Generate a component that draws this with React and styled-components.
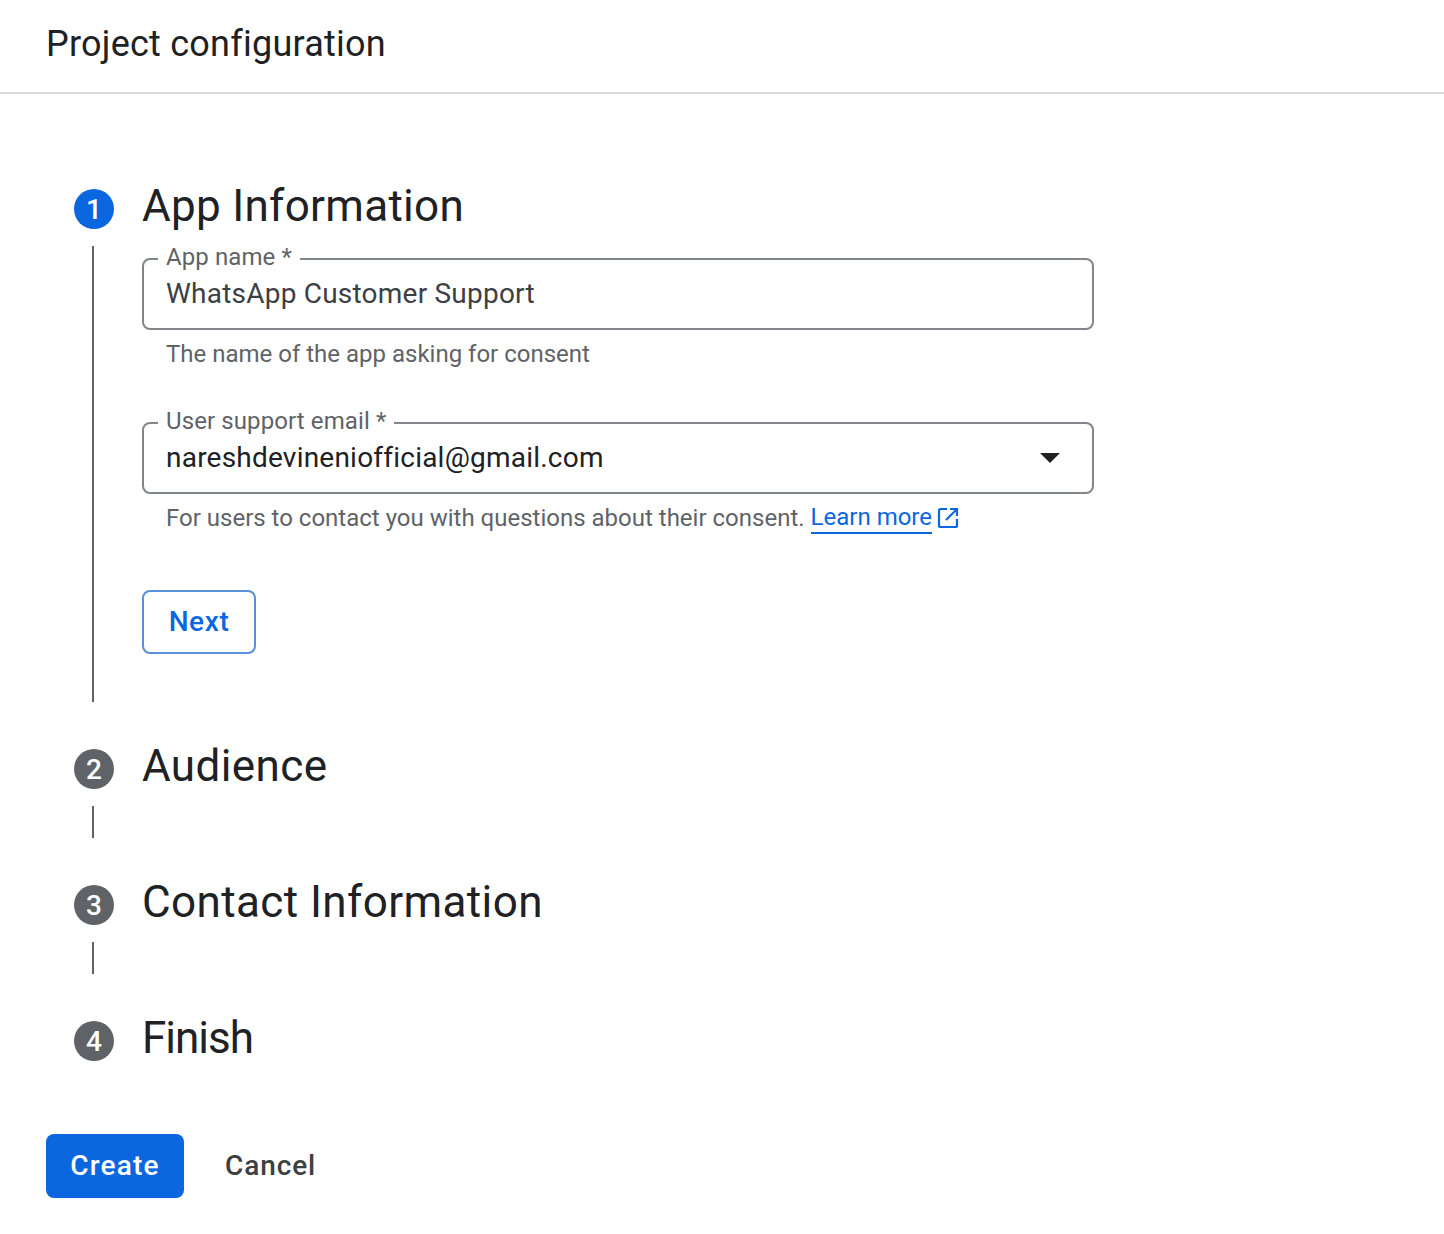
import React from 'react';
import styled, { createGlobalStyle } from 'styled-components';

const GlobalStyle = createGlobalStyle`
  html, body {
    margin: 0;
    padding: 0;
    background: #fff;
    font-family: Roboto, "Liberation Sans", sans-serif;
    color: #202124;
  }
`;

const Page = styled.div`
  width: 1444px;
  height: 1234px;
  overflow: hidden;
`;

const TopBar = styled.header`
  height: 92px;
  padding: 0 46px;
  display: flex;
  align-items: center;
  border-bottom: 2px solid #dadce0;
  box-sizing: content-box;
`;

const PageTitle = styled.h1`
  margin: -4px 0 0;
  font-size: 36px;
  font-weight: 400;
  letter-spacing: 0.24px;
  color: #202124;
`;

const Stepper = styled.div`
  padding: 94px 0 0 74px;
`;

const Step = styled.section`
  display: grid;
  grid-template-columns: 40px 1fr;
  column-gap: 28px;
`;

const StepHead = styled.h2`
  grid-column: 2;
  grid-row: 1;
  margin: 0;
  height: 40px;
  line-height: 36px;
  font-size: 44px;
  font-weight: 400;
  letter-spacing: ${(p) => p.$tracking || '0.4px'};
  color: #202124;
  white-space: nowrap;
`;

const Badge = styled.div`
  grid-column: 1;
  grid-row: 1;
  width: 40px;
  height: 40px;
  margin-top: 1px;
  border-radius: 50%;
  background: ${(p) => (p.$active ? '#0b67e0' : '#5f6368')};
  color: #fff;
  font-size: 28px;
  font-weight: 500;
  display: flex;
  align-items: center;
  justify-content: center;
`;

const Rail = styled.div`
  grid-column: 1;
  grid-row: 2;
  width: 2px;
  height: ${(p) => p.$height}px;
  margin: 17px 0 ${(p) => p.$after}px 18px;
  background: #5f6368;
`;

const StepBody = styled.div`
  grid-column: 2;
  grid-row: 2;
  padding-top: 16px;
  width: 952px;
`;

const Outline = styled.fieldset`
  position: relative;
  margin: 0;
  padding: 0 22px;
  height: 85px;
  box-sizing: border-box;
  border: 2px solid #80868b;
  border-radius: 8px;
  min-width: 0;
`;

const FieldLabel = styled.legend`
  margin-left: -8px;
  padding: 0 8px;
  font-size: 24px;
  line-height: 28px;
  letter-spacing: 0.1px;
  color: #5f6368;
`;

const LabelText = styled.span`
  display: block;
  transform: translateY(-2px);
`;

const FieldValue = styled.div`
  font-size: 28px;
  line-height: 36px;
  margin-top: 3px;
  color: ${(p) => (p.$dark ? '#202124' : '#3c4043')};
  letter-spacing: 0.22px;
`;

const Caret = styled.span`
  position: absolute;
  right: 32px;
  top: 16px;
  width: 0;
  height: 0;
  border-left: 10px solid transparent;
  border-right: 10px solid transparent;
  border-top: 10px solid #202124;
`;

const Hint = styled.p`
  margin: 8px 0 ${(p) => p.$after}px;
  padding-left: 24px;
  font-size: 24px;
  line-height: 32px;
  color: #5f6368;
  display: flex;
  align-items: center;
`;

const LearnMore = styled.a`
  margin-left: 6px;
  color: #0b67e0;
  text-decoration: none;
  border-bottom: 2px solid #0b67e0;
  line-height: 30px;
`;

const LinkIcon = styled.svg`
  width: 22px;
  height: 22px;
  margin-left: 5px;
  fill: none;
  stroke: #0b67e0;
  stroke-width: 2.2;
`;

const NextButton = styled.button`
  display: block;
  width: 114px;
  height: 64px;
  padding: 0 0 2px;
  background: #fff;
  border: 2px solid #5a8fdc;
  border-radius: 8px;
  color: #0b67e0;
  font: 500 28px Roboto, "Liberation Sans", sans-serif;
  letter-spacing: 0.6px;
`;

const Actions = styled.div`
  display: flex;
  align-items: center;
  padding: 73px 0 0 46px;
  gap: 41px;
`;

const CreateButton = styled.button`
  width: 138px;
  height: 64px;
  padding: 0 0 2px;
  border: 0;
  border-radius: 8px;
  background: #0b67e0;
  color: #fff;
  font: 500 28px Roboto, "Liberation Sans", sans-serif;
  letter-spacing: 1.2px;
`;

const CancelButton = styled.button`
  padding: 0 0 2px;
  border: 0;
  background: none;
  color: #3c4043;
  font: 500 28px Roboto, "Liberation Sans", sans-serif;
  letter-spacing: 0.9px;
`;

const App = () => {
  return (
    <Page>
      <GlobalStyle />
      <TopBar>
        <PageTitle>Project configuration</PageTitle>
      </TopBar>
      <Stepper>
        <Step>
          <Badge $active>1</Badge>
          <StepHead $tracking="0.3px">App Information</StepHead>
          <Rail $height={456} $after={46} />
          <StepBody>
            <Outline>
              <FieldLabel><LabelText>App name *</LabelText></FieldLabel>
              <FieldValue>WhatsApp Customer Support</FieldValue>
            </Outline>
            <Hint $after={39}>The name of the app asking for consent</Hint>
            <Outline>
              <FieldLabel><LabelText>User support email *</LabelText></FieldLabel>
              <FieldValue $dark>nareshdevineniofficial@gmail.com</FieldValue>
              <Caret />
            </Outline>
            <Hint $after={56}>
              For users to contact you with questions about their consent.
              <LearnMore href="#">Learn more</LearnMore>
              <LinkIcon viewBox="0 0 22 22">
                <path d="M10 2H3.500A1.500 1.500 0 0 0 2 3.500v15A1.500 1.500 0 0 0 3.500 20h15a1.500 1.500 0 0 0 1.500-1.500V12" />
                <path d="M13 2h7v7" />
                <path d="M20 2 9 13" />
              </LinkIcon>
            </Hint>
            <NextButton>Next</NextButton>
          </StepBody>
        </Step>
        <Step>
          <Badge>2</Badge>
          <StepHead>Audience</StepHead>
          <Rail $height={32} $after={46} />
        </Step>
        <Step>
          <Badge>3</Badge>
          <StepHead>Contact Information</StepHead>
          <Rail $height={32} $after={46} />
        </Step>
        <Step>
          <Badge>4</Badge>
          <StepHead $tracking="-1px">Finish</StepHead>
        </Step>
      </Stepper>
      <Actions>
        <CreateButton>Create</CreateButton>
        <CancelButton>Cancel</CancelButton>
      </Actions>
    </Page>
  );
};

export default App;
